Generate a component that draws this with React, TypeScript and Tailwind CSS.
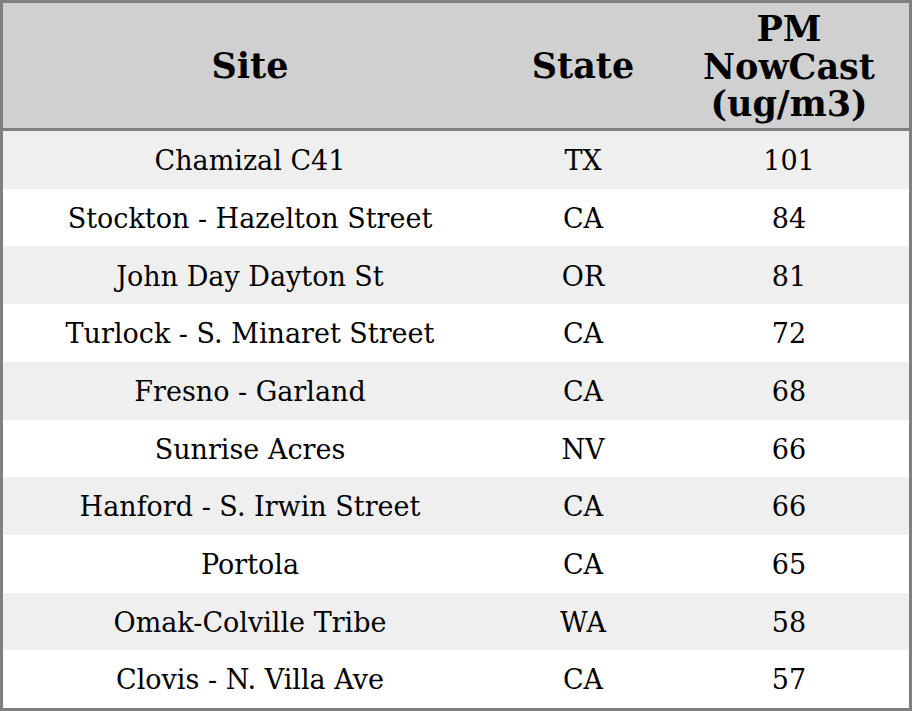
import React from "react";

const rows: [string, string, string][] = [
  ["Chamizal C41", "TX", "101"],
  ["Stockton - Hazelton Street", "CA", "84"],
  ["John Day Dayton St", "OR", "81"],
  ["Turlock - S. Minaret Street", "CA", "72"],
  ["Fresno - Garland", "CA", "68"],
  ["Sunrise Acres", "NV", "66"],
  ["Hanford - S. Irwin Street", "CA", "66"],
  ["Portola", "CA", "65"],
  ["Omak-Colville Tribe", "WA", "58"],
  ["Clovis - N. Villa Ave", "CA", "57"],
];

export default function App() {
  return (
    <div
      className="w-[912px] h-[711px] bg-white border-[3px] border-[#808080] flex flex-col text-black"
      style={{ fontFamily: '"DejaVu Serif", serif' }}
    >
      <div className="flex h-[125px] bg-[#d0d0d0] border-b-[3px] border-[#808080] box-content font-bold text-[35px] leading-[37.5px]">
        <div className="w-[494px] flex items-center justify-center">Site</div>
        <div className="w-[172px] flex items-center justify-center">State</div>
        <div className="flex-1 flex items-center justify-center text-center pt-[2px]">
          PM
          <br />
          NowCast
          <br />
          (ug/m3)
        </div>
      </div>
      <div className="flex-1 flex flex-col text-[27px]">
        {rows.map((r, i) => (
          <div
            key={i}
            className={`flex-1 flex items-center pt-[3px] ${i % 2 === 0 ? "bg-[#efefef]" : "bg-white"}`}
          >
            <div className="w-[494px] text-center">{r[0]}</div>
            <div className="w-[172px] text-center">{r[1]}</div>
            <div className="flex-1 text-center">{r[2]}</div>
          </div>
        ))}
      </div>
    </div>
  );
}
